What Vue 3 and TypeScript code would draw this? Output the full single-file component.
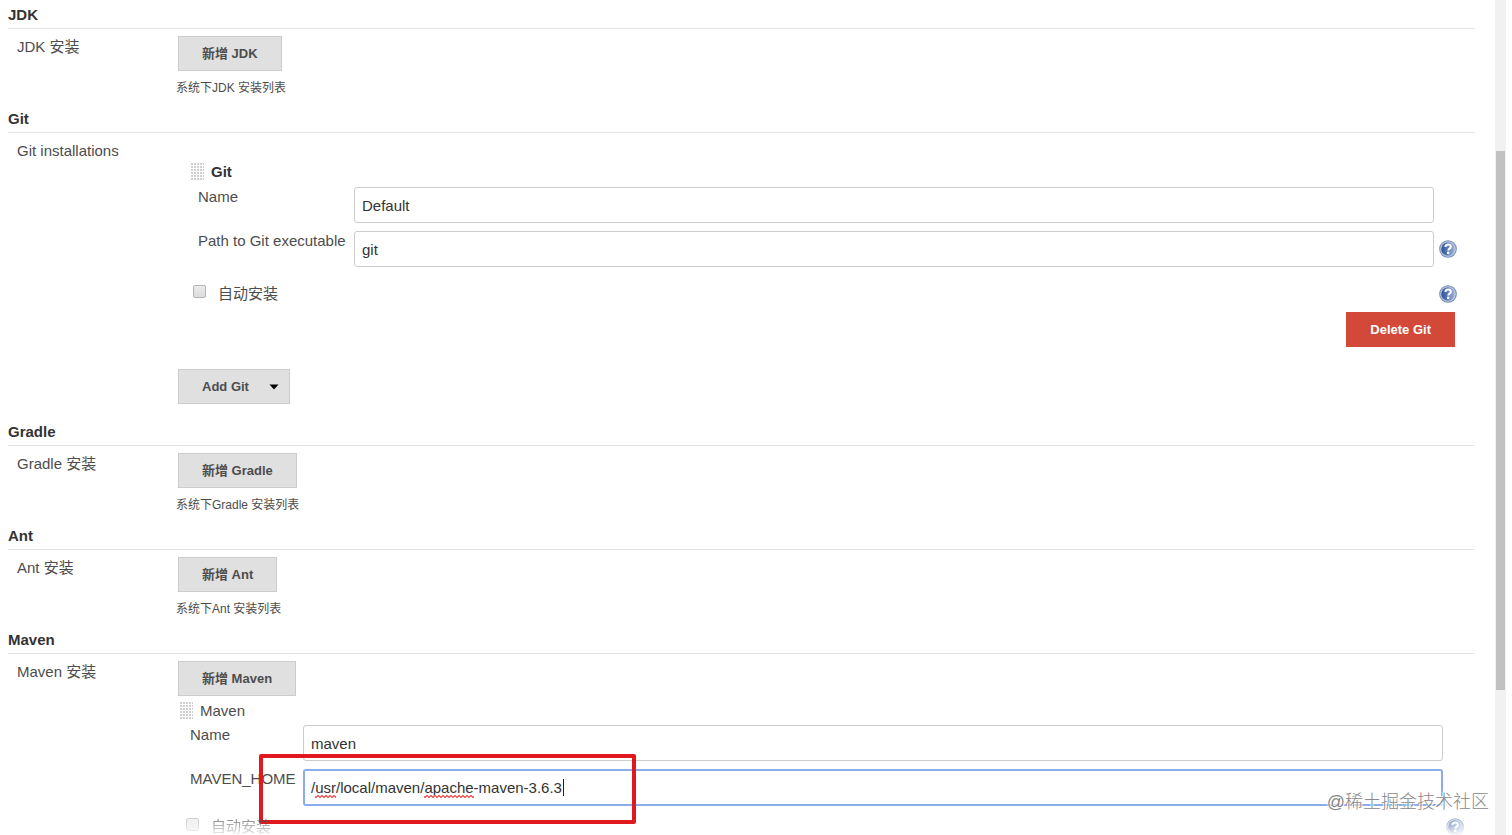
<script setup lang="ts">
import { ref } from 'vue'

interface Tool {
  name: string
  kind: 'list' | 'git' | 'maven'
  label: string
}

const tools: Tool[] = [
  { name: 'JDK', kind: 'list', label: 'JDK 安装' },
  { name: 'Git', kind: 'git', label: 'Git installations' },
  { name: 'Gradle', kind: 'list', label: 'Gradle 安装' },
  { name: 'Ant', kind: 'list', label: 'Ant 安装' },
  { name: 'Maven', kind: 'maven', label: 'Maven 安装' },
]

const gitName = ref('Default')
const gitPath = ref('git')
const gitAuto = ref(false)
const mavenName = ref('maven')
const mavenHome = ref('/usr/local/maven/apache-maven-3.6.3')
const mavenAuto = ref(false)
</script>

<template>
  <div class="window">
    <svg class="defs" width="0" height="0" aria-hidden="true">
      <defs>
        <linearGradient id="ball" x1="0" y1="0" x2="1" y2="0">
          <stop offset="0" stop-color="#2f5597" />
          <stop offset="0.45" stop-color="#5578b4" />
          <stop offset="1" stop-color="#a3b7d9" />
        </linearGradient>
        <pattern id="dots" width="3" height="3" patternUnits="userSpaceOnUse">
          <rect width="2" height="2" fill="#cfcfcf" />
        </pattern>
        <symbol id="help" viewBox="0 0 18 18">
          <circle cx="9" cy="9" r="8.8" fill="#7088b0" />
          <circle cx="9" cy="9" r="7.8" fill="#c3d0e6" />
          <circle cx="9" cy="9" r="6.8" fill="url(#ball)" />
          <path d="M6.400 7.100C6.400 5.300 7.500 4.400 9.100 4.400c1.600 0 2.700.9 2.700 2.300 0 1.900-2.500 1.900-2.500 3.800" fill="none" stroke="#fff" stroke-width="2" />
          <circle cx="9.200" cy="12.900" r="1.300" fill="#fff" />
        </symbol>
        <symbol id="grip" viewBox="0 0 13 18">
          <rect width="13" height="18" fill="url(#dots)" />
        </symbol>
      </defs>
    </svg>

    <main class="page">
      <section v-for="tool in tools" :key="tool.name" class="tool">
        <h2>{{ tool.name }}</h2>
        <div class="row">
          <div class="caption">{{ tool.label }}</div>

          <div v-if="tool.kind === 'list'" class="content">
            <button type="button" class="btn">新增 {{ tool.name }}</button>
            <p class="hint">系统下{{ tool.name }} 安装列表</p>
          </div>

          <div v-else-if="tool.kind === 'git'" class="content git">
            <div class="entry">
              <div class="entry-head strong">
                <svg class="grip" aria-hidden="true"><use href="#grip" /></svg>
                <span>Git</span>
              </div>
              <div class="field">
                <label for="git-name">Name</label>
                <input id="git-name" v-model="gitName" type="text" spellcheck="false" />
              </div>
              <div class="field">
                <label for="git-path">Path to Git executable</label>
                <input id="git-path" v-model="gitPath" type="text" spellcheck="false" />
                <a href="#" class="help" aria-label="Help"><svg><use href="#help" /></svg></a>
              </div>
              <div class="check">
                <input id="git-auto" v-model="gitAuto" type="checkbox" />
                <label for="git-auto">自动安装</label>
                <a href="#" class="help" aria-label="Help"><svg><use href="#help" /></svg></a>
              </div>
              <div class="actions">
                <button type="button" class="btn danger">Delete Git</button>
              </div>
            </div>
            <button type="button" class="btn menu">
              Add Git
              <svg viewBox="0 0 10 6" aria-hidden="true"><path d="M0.500 0.500h9L5 5.500z" /></svg>
            </button>
          </div>

          <div v-else class="content maven">
            <button type="button" class="btn">新增 Maven</button>
            <div class="entry">
              <div class="entry-head">
                <svg class="grip" aria-hidden="true"><use href="#grip" /></svg>
                <span>Maven</span>
              </div>
              <div class="field">
                <label for="maven-name">Name</label>
                <input id="maven-name" v-model="mavenName" type="text" spellcheck="false" />
              </div>
              <div class="field active">
                <label for="maven-home">MAVEN_HOME</label>
                <div class="box">
                  <input id="maven-home" v-model="mavenHome" type="text" spellcheck="false" />
                  <i class="typo usr"></i>
                  <i class="typo apache"></i>
                  <i class="caret"></i>
                </div>
                <div class="marker"></div>
              </div>
              <div class="check">
                <input id="maven-auto" v-model="mavenAuto" type="checkbox" />
                <label for="maven-auto">自动安装</label>
                <a href="#" class="help" aria-label="Help"><svg><use href="#help" /></svg></a>
              </div>
            </div>
          </div>
        </div>
      </section>
    </main>

    <div class="scrollbar" aria-hidden="true"><div class="thumb"></div></div>
    <div class="watermark">@稀土掘金技术社区</div>
  </div>
</template>

<style>
body {
  margin: 0;
  background: #fff;
}
</style>

<style scoped>
* {
  box-sizing: border-box;
}

.window {
  position: relative;
  display: flex;
  height: 100vh;
  overflow: hidden;
  font: 15px/20px "Liberation Sans", "Noto Sans CJK SC", sans-serif;
  color: #4d4d4d;
}

.defs {
  position: absolute;
}

.page {
  flex: 1;
  min-width: 0;
  padding: 0 20px 0 8px;
}

h2 {
  margin: 0;
  padding: 5px 0 3px;
  border-bottom: 1px solid #e3e3e3;
  font-size: 15px;
  line-height: 20px;
  color: #333;
}

.row {
  display: grid;
  grid-template-columns: 161px minmax(0, 1fr);
  padding: 7px 0 0 9px;
}

.caption {
  padding-top: 1px;
}

.content {
  padding-bottom: 6px;
}

.btn {
  display: inline-flex;
  align-items: center;
  height: 35px;
  padding: 0 23px;
  border: 1px solid #ccc;
  background: #e0e0e0;
  font: bold 13px/20px "Liberation Sans", "Noto Sans CJK SC", sans-serif;
  color: #4d4d4d;
  vertical-align: top;
}

.btn.danger {
  border-color: #d24939;
  background: #d24939;
  color: #fff;
}

.btn.menu {
  gap: 20px;
  padding-right: 10px;
}

.btn.menu svg {
  width: 10px;
  height: 6px;
  fill: #000;
}

.hint {
  margin: 7px 0 0 -2px;
  font-size: 12px;
  line-height: 20px;
}

.entry-head {
  display: flex;
  align-items: center;
  gap: 7px;
  height: 24px;
}

.entry-head.strong {
  font-weight: bold;
  color: #333;
}

.grip {
  width: 13px;
  height: 18px;
}

.field {
  position: relative;
  display: flex;
  height: 44px;
}

.field input {
  flex: 1;
  min-width: 0;
  width: 100%;
  height: 36px;
  padding: 0 7px;
  border: 1px solid #ccc;
  border-radius: 3px;
  outline: none;
  background: #fff;
  font: inherit;
  color: #333;
}

.check {
  display: flex;
  align-items: center;
}

.check input {
  appearance: none;
  width: 13px;
  height: 13px;
  margin: 0 12px 4px 0;
  border: 1px solid #b3b3b3;
  border-radius: 2px;
  background: linear-gradient(#ececec, #dcdcdc);
}

.help {
  display: block;
  width: 18px;
  height: 18px;
}

.help svg {
  display: block;
  width: 18px;
  height: 18px;
}

.check .help {
  margin-left: auto;
}

.git {
  padding: 20px 0 13px;
}

.git .entry {
  padding: 0 18px 22px 13px;
}

.git .entry-head {
  margin-bottom: 3px;
}

.git .field {
  padding: 0 23px 0 7px;
}

.git .field label {
  width: 156px;
  white-space: nowrap;
}

.git .field .help {
  position: absolute;
  top: 9px;
  right: 0;
}

.git .check {
  height: 37px;
  padding-left: 2px;
}

.git .actions {
  display: flex;
  justify-content: flex-end;
  padding-right: 2px;
}

.maven .entry {
  padding-left: 2px;
}

.maven .entry-head {
  margin: 3px 0 2px;
}

.maven .field {
  padding: 0 32px 0 10px;
}

.maven .field label {
  width: 113px;
}

.box {
  position: relative;
  flex: 1;
}

.field.active input {
  height: 37px;
  padding: 0 6px;
  border: 2px solid #8aaeea;
}

.typo {
  position: absolute;
  top: 26px;
  height: 3px;
  background:
    radial-gradient(circle at 1px 2px, #e66 1px, transparent 1px) 0 0 / 4px 3px,
    radial-gradient(circle at 3px 1px, #e66 1px, transparent 1px) 0 0 / 4px 3px;
}

.typo.usr {
  left: 12px;
  width: 21px;
}

.typo.apache {
  left: 121px;
  width: 50px;
}

.caret {
  position: absolute;
  top: 10px;
  left: 260px;
  width: 1px;
  height: 17px;
  background: #222;
}

.marker {
  position: absolute;
  top: -15px;
  left: 79px;
  width: 377px;
  height: 70px;
  border: 4px solid #e0191f;
  border-radius: 2px;
  pointer-events: none;
}

.maven .check {
  height: 27px;
  padding: 0 11px 0 6px;
  opacity: 0.6;
  mask-image: linear-gradient(#000 30%, transparent 90%);
}

.scrollbar {
  display: flex;
  flex-direction: column;
  width: 11px;
  margin-right: 6px;
  padding: 0 1px;
  background: #f1f1f1;
}

.thumb {
  height: 64.5%;
  margin-top: 151px;
  background: #c1c1c1;
}

.watermark {
  position: absolute;
  right: 23px;
  bottom: 21px;
  font-size: 18px;
  font-weight: 300;
  line-height: 24px;
  color: #888;
  text-shadow: 1px 1px 0 #fff, -1px -1px 0 #fff;
}
</style>
